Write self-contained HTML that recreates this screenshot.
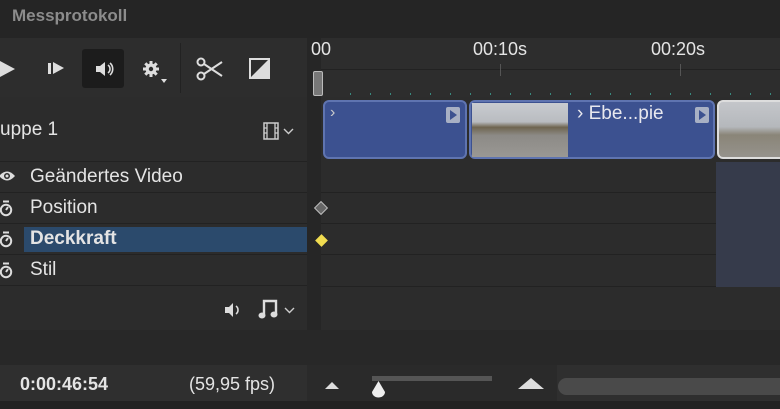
<!DOCTYPE html>
<html><head><style>
*{margin:0;padding:0;box-sizing:border-box}
body{width:780px;height:409px;background:#2c2c2c;font-family:"Liberation Sans",sans-serif;color:#e4e4e4;position:relative;overflow:hidden}
.a{position:absolute}
.row{position:absolute;left:0;width:307px;height:31px;font-size:19px;line-height:30px}
.lbl{position:absolute;left:30px}
.ic{position:absolute;left:-1px;top:7px}
.tl{position:absolute;left:321px;width:459px;border-bottom:1px solid #222}
.clip{position:absolute;top:100px;height:59px;background:#3c5190;border:2px solid #5f74b0;border-radius:6px}
.pl{position:absolute;width:14px;height:16px;background:#a8b0c4;border-radius:2px}
.pl:after{content:"";position:absolute;left:4px;top:3px;border-left:7px solid #3c5190;border-top:5px solid transparent;border-bottom:5px solid transparent}
</style></head><body>
<div class="a" style="left:0;top:0;width:780px;height:38px;background:#252525"></div>
<div class="a" style="left:12px;top:6px;font-size:17px;font-weight:bold;color:#8c8c8c">Messprotokoll</div>
<div class="a" style="left:0;top:38px;width:780px;height:59px;background:#2d2d2d"></div>
<div class="a" style="left:307px;top:38px;width:14px;height:292px;background:#262626"></div>
<div class="a" style="left:180px;top:43px;width:1px;height:50px;background:#222"></div>
<div class="a" style="left:0;top:61px;border-left:15px solid #ddd;border-top:8px solid transparent;border-bottom:8px solid transparent"></div>
<div class="a" style="left:48px;top:63px;width:3px;height:11px;background:#ddd"></div>
<div class="a" style="left:53px;top:62px;border-left:11px solid #ddd;border-top:6px solid transparent;border-bottom:6px solid transparent"></div>
<div class="a" style="left:82px;top:49px;width:42px;height:39px;background:#1c1c1c;border-radius:3px"></div>
<svg class="a" style="left:94px;top:58px" width="22" height="22" viewBox="0 0 22 22"><path d="M2 8h4l5-4v14l-5-4H2z" fill="#ddd"/><path d="M14 7a5 5 0 0 1 0 8M16 5a8 8 0 0 1 0 12" stroke="#ddd" stroke-width="1.6" fill="none"/></svg>
<svg class="a" style="left:142px;top:60px" width="18" height="18" viewBox="0 0 18 18"><g stroke="#ddd" stroke-width="3"><path d="M9 1v16M1 9h16M3.3 3.3l11.4 11.4M14.7 3.3L3.3 14.7"/></g><circle cx="9" cy="9" r="5.5" fill="#ddd"/><circle cx="9" cy="9" r="2.2" fill="#2d2d2d"/></svg>
<div class="a" style="left:161px;top:79px;border-top:4px solid #ddd;border-left:3px solid transparent;border-right:3px solid transparent"></div>
<svg class="a" style="left:196px;top:57px" width="27" height="24" viewBox="0 0 27 24"><circle cx="5" cy="5" r="3.5" fill="none" stroke="#ddd" stroke-width="2"/><circle cx="5" cy="19" r="3.5" fill="none" stroke="#ddd" stroke-width="2"/><path d="M8 7L26 19M8 17L26 5" stroke="#ddd" stroke-width="2"/></svg>
<svg class="a" style="left:249px;top:58px" width="21" height="21"><rect x="1" y="1" width="19" height="19" fill="none" stroke="#ddd" stroke-width="2"/><path d="M20 1L1 20h19z" fill="#ddd"/></svg>
<div class="a" style="left:0;top:97px;width:307px;height:65px;background:#2c2c2c;border-bottom:1px solid #222"></div>
<div class="a" style="left:0;top:119px;font-size:19px">uppe 1</div>
<svg class="a" style="left:263px;top:122px" width="16" height="18"><rect x="1" y="1" width="14" height="16" fill="none" stroke="#ccc" stroke-width="1.5"/><path d="M4 1v16M12 1v16M1 6h3M1 11h3M12 6h3M12 11h3" stroke="#ccc" stroke-width="1.3"/></svg>
<svg class="a" style="left:283px;top:128px" width="11" height="7"><path d="M1 1l4.5 4.5L10 1" stroke="#ccc" stroke-width="1.4" fill="none"/></svg>
<div class="row" style="top:162px;border-bottom:1px solid #222"><svg class="ic" width="16" height="14" viewBox="0 0 16 14"><path d="M0 7Q8-2 16 7Q8 16 0 7z" fill="#ddd"/><circle cx="8" cy="7" r="3" fill="#2c2c2c"/><circle cx="8" cy="7" r="1.5" fill="#ddd"/></svg><span class="lbl">Geändertes Video</span></div>
<div class="row" style="top:193px;border-bottom:1px solid #222"><svg class="ic" width="14" height="17" viewBox="0 0 14 17"><circle cx="7" cy="10" r="5.2" fill="none" stroke="#ddd" stroke-width="2"/><path d="M4 1.5h6M7 10l2-3" stroke="#ddd" stroke-width="2"/></svg><span class="lbl">Position</span></div>
<div class="row" style="top:224px;border-bottom:1px solid #222"><svg class="ic" width="14" height="17" viewBox="0 0 14 17"><circle cx="7" cy="10" r="5.2" fill="none" stroke="#ddd" stroke-width="2"/><path d="M4 1.5h6M7 10l2-3" stroke="#ddd" stroke-width="2"/></svg><span class="a" style="left:24px;top:3px;width:283px;height:25px;background:#2b4a6c"></span><span class="lbl" style="font-weight:bold">Deckkraft</span></div>
<div class="row" style="top:255px;border-bottom:1px solid #222"><svg class="ic" width="14" height="17" viewBox="0 0 14 17"><circle cx="7" cy="10" r="5.2" fill="none" stroke="#ddd" stroke-width="2"/><path d="M4 1.5h6M7 10l2-3" stroke="#ddd" stroke-width="2"/></svg><span class="lbl">Stil</span></div>
<svg class="a" style="left:224px;top:301px" width="20" height="18"><path d="M1 6h4l4-4v14l-4-4H1z" fill="#ddd"/><path d="M12 5a5 5 0 0 1 0 8" stroke="#ddd" stroke-width="1.6" fill="none"/></svg>
<svg class="a" style="left:258px;top:298px" width="20" height="22" viewBox="0 0 20 22"><path d="M6 17V3h12v13" stroke="#ddd" stroke-width="2.4" fill="none"/><ellipse cx="4" cy="17.5" rx="3.5" ry="3" fill="#ddd"/><ellipse cx="16" cy="16.5" rx="3.5" ry="3" fill="#ddd"/></svg>
<svg class="a" style="left:284px;top:307px" width="11" height="7"><path d="M1 1l4.5 4.5L10 1" stroke="#ccc" stroke-width="1.4" fill="none"/></svg>
<div class="a" style="left:0;top:330px;width:780px;height:35px;background:#282828"></div>
<div class="a" style="left:311px;top:39px;font-size:18px">00</div>
<div class="a" style="left:473px;top:39px;font-size:18px">00:10s</div>
<div class="a" style="left:651px;top:39px;font-size:18px">00:20s</div>
<div class="a" style="left:321px;top:69px;width:459px;height:1px;background:#222"></div>
<div class="a" style="left:500px;top:64px;width:1px;height:12px;background:#555"></div>
<div class="a" style="left:680px;top:64px;width:1px;height:12px;background:#555"></div>
<div class="a" style="left:313px;top:71px;width:10px;height:25px;background:#777;border:1px solid #bbb;border-radius:2px"></div>
<div class="a" style="left:350px;top:93px;width:430px;height:2px;background:repeating-linear-gradient(90deg,#3a8a80 0 1px,transparent 1px 20px)"></div>
<div class="tl" style="top:162px;height:31px"></div>
<div class="tl" style="top:193px;height:31px"></div>
<div class="tl" style="top:224px;height:31px"></div>
<div class="tl" style="top:255px;height:32px"></div>
<div class="a" style="left:716px;top:162px;width:64px;height:125px;background:#363b4b"></div>
<div class="clip" style="left:323px;width:144px"><div class="a" style="left:5px;top:2px;color:#ccc;font-size:16px">›</div><div class="pl" style="left:121px;top:5px"></div></div>
<div class="clip" style="left:469px;width:246px">
<div class="a" style="left:1px;top:1px;width:96px;height:54px;background:linear-gradient(180deg,#c8cbd0 0,#b9bcc0 35%,#6f6550 45%,#8c8a86 60%,#9a9894 100%)"></div>
<div class="a" style="left:106px;top:1px;font-size:19px;color:#e8e8ee">› Ebe...pie</div><div class="pl" style="left:224px;top:5px"></div></div>
<div class="clip" style="left:717px;width:70px;border-color:#ddd;background:linear-gradient(180deg,#c4c6ca 0,#b5b8bc 45%,#8a8578 60%,#95928c 100%)"></div>
<div class="a" style="left:316px;top:203px;width:10px;height:10px;background:#666;border:1.5px solid #bbb;transform:rotate(45deg)"></div>
<div class="a" style="left:317px;top:236px;width:9px;height:9px;background:#f0dc50;transform:rotate(45deg)"></div>
<div class="a" style="left:0;top:365px;width:780px;height:36px;background:#2f2f2f"></div>
<div class="a" style="left:307px;top:365px;width:250px;height:36px;background:#2a2a2a"></div>
<div class="a" style="left:20px;top:374px;font-size:18px;font-weight:bold">0:00:46:54</div>
<div class="a" style="left:189px;top:374px;font-size:18px">(59,95 fps)</div>
<div class="a" style="left:325px;top:382px;border-bottom:7px solid #ddd;border-left:7px solid transparent;border-right:7px solid transparent"></div>
<div class="a" style="left:372px;top:376px;width:120px;height:5px;background:#555"></div>
<svg class="a" style="left:370px;top:380px" width="17" height="18"><path d="M8.5 1L15 12a6.5 5.5 0 0 1-13 0z" fill="#eee"/></svg>
<div class="a" style="left:518px;top:378px;border-bottom:11px solid #ddd;border-left:13px solid transparent;border-right:13px solid transparent"></div>
<div class="a" style="left:558px;top:378px;width:230px;height:17px;background:#4a4a4a;border-radius:9px"></div>
<div class="a" style="left:0;top:401px;width:780px;height:8px;background:#222"></div>
</body></html>
